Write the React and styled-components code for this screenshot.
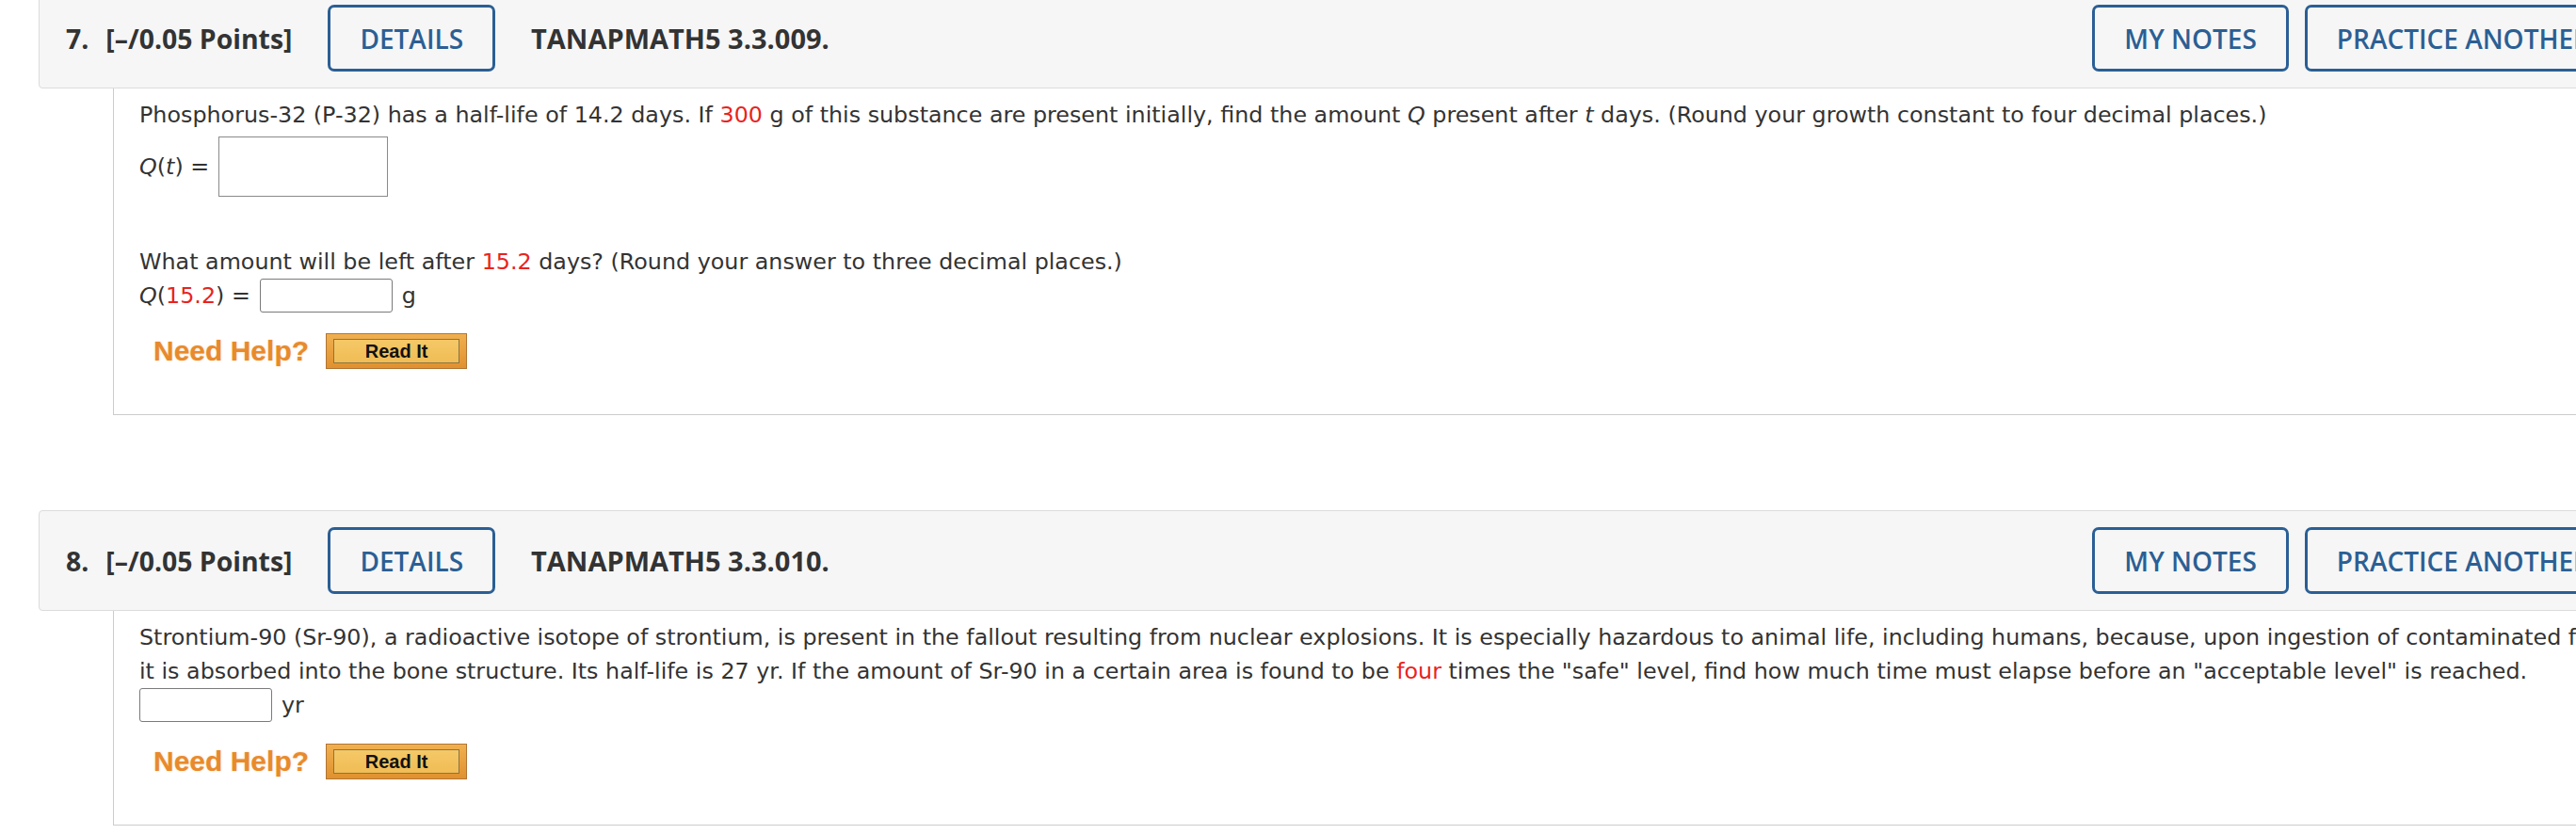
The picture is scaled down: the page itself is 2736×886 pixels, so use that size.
import React from 'react';
import styled, { createGlobalStyle } from 'styled-components';

const Global = createGlobalStyle`
  html, body {
    margin: 0;
    padding: 0;
    background: #fff;
    overflow: hidden;
  }
`

const Page = styled.div`
  margin-top: -13px;
  margin-left: 41px;
  width: 2773px;
`
const Question = styled.section`
  margin-bottom: ${p => p.$gap || 0}px;
`
const Header = styled.div`
  display: flex;
  align-items: center;
  gap: 38px;
  padding: 17px 28px;
  background: #f6f6f6;
  border: 1px solid #dcdcdc;
  border-radius: 4px;
  font-family: "Open Sans", sans-serif;
  font-size: 28px;
  color: #333;
`
const Title = styled.div`
  display: flex;
  gap: 18px;
  font-weight: 700;
  font-size: 28.4px;
`
const Code = styled.div`
  font-weight: 700;
  font-size: 29px;
`
const Actions = styled.div`
  margin-left: auto;
  display: flex;
  gap: 17px;
`
const OutlineButton = styled.button`
  height: 71px;
  padding: 0 31px;
  background: transparent;
  border: 3px solid #2b5f94;
  border-radius: 7px;
  color: #2b5f94;
  font-family: "Open Sans", sans-serif;
  font-weight: 600;
  font-size: 28px;
  white-space: nowrap;
`
const Body = styled.div`
  margin-left: 79px;
  margin-right: 16px;
  padding: 10px 0 48px 27px;
  background: #fff;
  border: 1px solid #cccccc;
  border-top: none;
  font-family: Verdana, "DejaVu Sans", sans-serif;
  font-size: 23.8px;
  line-height: 36px;
  color: #333;
`
const Line = styled.div`
  margin-top: ${p => p.$mt || 0}px;
  display: flex;
  align-items: center;
  gap: 10px;
`
const Para = styled.p`
  margin: 0;
  margin-top: ${p => p.$mt || 0}px;
`
const Red = styled.span`
  color: #e8231f;
`
const Var = styled.i``

const BigInput = styled.div`
  width: 180px;
  height: 64px;
  box-sizing: border-box;
  border: 1px solid #8a8a8a;
  background: #fff;
`
const SmallInput = styled.div`
  width: 141px;
  height: 36px;
  box-sizing: border-box;
  border: 1px solid #7a7a7a;
  border-radius: 3px;
  background: #fff;
`
const Help = styled.div`
  margin-top: ${p => p.$mt || 0}px;
  margin-left: 15px;
  display: flex;
  align-items: center;
  gap: 18px;
`
const HelpText = styled.span`
  font-family: "Liberation Sans", Arial, sans-serif;
  font-weight: 700;
  font-size: 30px;
  color: #e88a2c;
  text-shadow: 0 0 2px rgba(232, 138, 44, 0.45);
  line-height: 38px;
`
const ReadIt = styled.button`
  width: 150px;
  height: 38px;
  box-sizing: border-box;
  padding: 0;
  border: 1px solid #b07535;
  background: linear-gradient(#f0b050, #e0912f);
  display: flex;
  align-items: stretch;
  justify-content: stretch;
  span {
    flex: 1;
    margin: 5px 7px;
    border: 1px solid #8d7441;
    background: linear-gradient(#f5c867, #f0bc55);
    display: flex;
    align-items: center;
    justify-content: center;
    font-family: "Liberation Sans", Arial, sans-serif;
    font-weight: 700;
    font-size: 20px;
    color: #111;
  }
`

function QHeader({ num, code }) {
  return (
    <Header>
      <Title>
        <span>{num}.</span>
        <span>[–/0.05 Points]</span>
      </Title>
      <OutlineButton>DETAILS</OutlineButton>
      <Code>{code}</Code>
      <Actions>
        <OutlineButton>MY NOTES</OutlineButton>
        <OutlineButton>PRACTICE ANOTHER</OutlineButton>
      </Actions>
    </Header>
  )
}

function NeedHelp({ mt }) {
  return (
    <Help $mt={mt}>
      <HelpText>Need Help?</HelpText>
      <ReadIt><span>Read It</span></ReadIt>
    </Help>
  )
}

export default function App() {
  return (
    <Page>
      <Global />
      <Question $gap={101}>
        <QHeader num={7} code="TANAPMATH5 3.3.009." />
        <Body>
          <Para>
            Phosphorus-32 (P-32) has a half-life of 14.2 days. If <Red>300</Red> g of this substance are present initially, find the amount <Var>Q</Var> present after <Var>t</Var> days. (Round your growth constant to four decimal places.)
          </Para>
          <Line $mt={5}>
            <span><Var>Q</Var>(<Var>t</Var>) =</span>
            <BigInput />
          </Line>
          <Para $mt={51}>
            What amount will be left after <Red>15.2</Red> days? (Round your answer to three decimal places.)
          </Para>
          <Line>
            <span><Var>Q</Var>(<Red>15.2</Red>) =</span>
            <SmallInput />
            <span>g</span>
          </Line>
          <NeedHelp mt={22} />
        </Body>
      </Question>
      <Question>
        <QHeader num={8} code="TANAPMATH5 3.3.010." />
        <Body>
          <Para>
            Strontium-90 (Sr-90), a radioactive isotope of strontium, is present in the fallout resulting from nuclear explosions. It is especially hazardous to animal life, including humans, because, upon ingestion of contaminated food, it is absorbed into the bone structure. Its half-life is 27 yr. If the amount of Sr-90 in a certain area is found to be <Red>four</Red> times the "safe" level, find how much time must elapse before an "acceptable level" is reached.
          </Para>
          <Line>
            <SmallInput />
            <span>yr</span>
          </Line>
          <NeedHelp mt={23} />
        </Body>
      </Question>
    </Page>
  )
}
